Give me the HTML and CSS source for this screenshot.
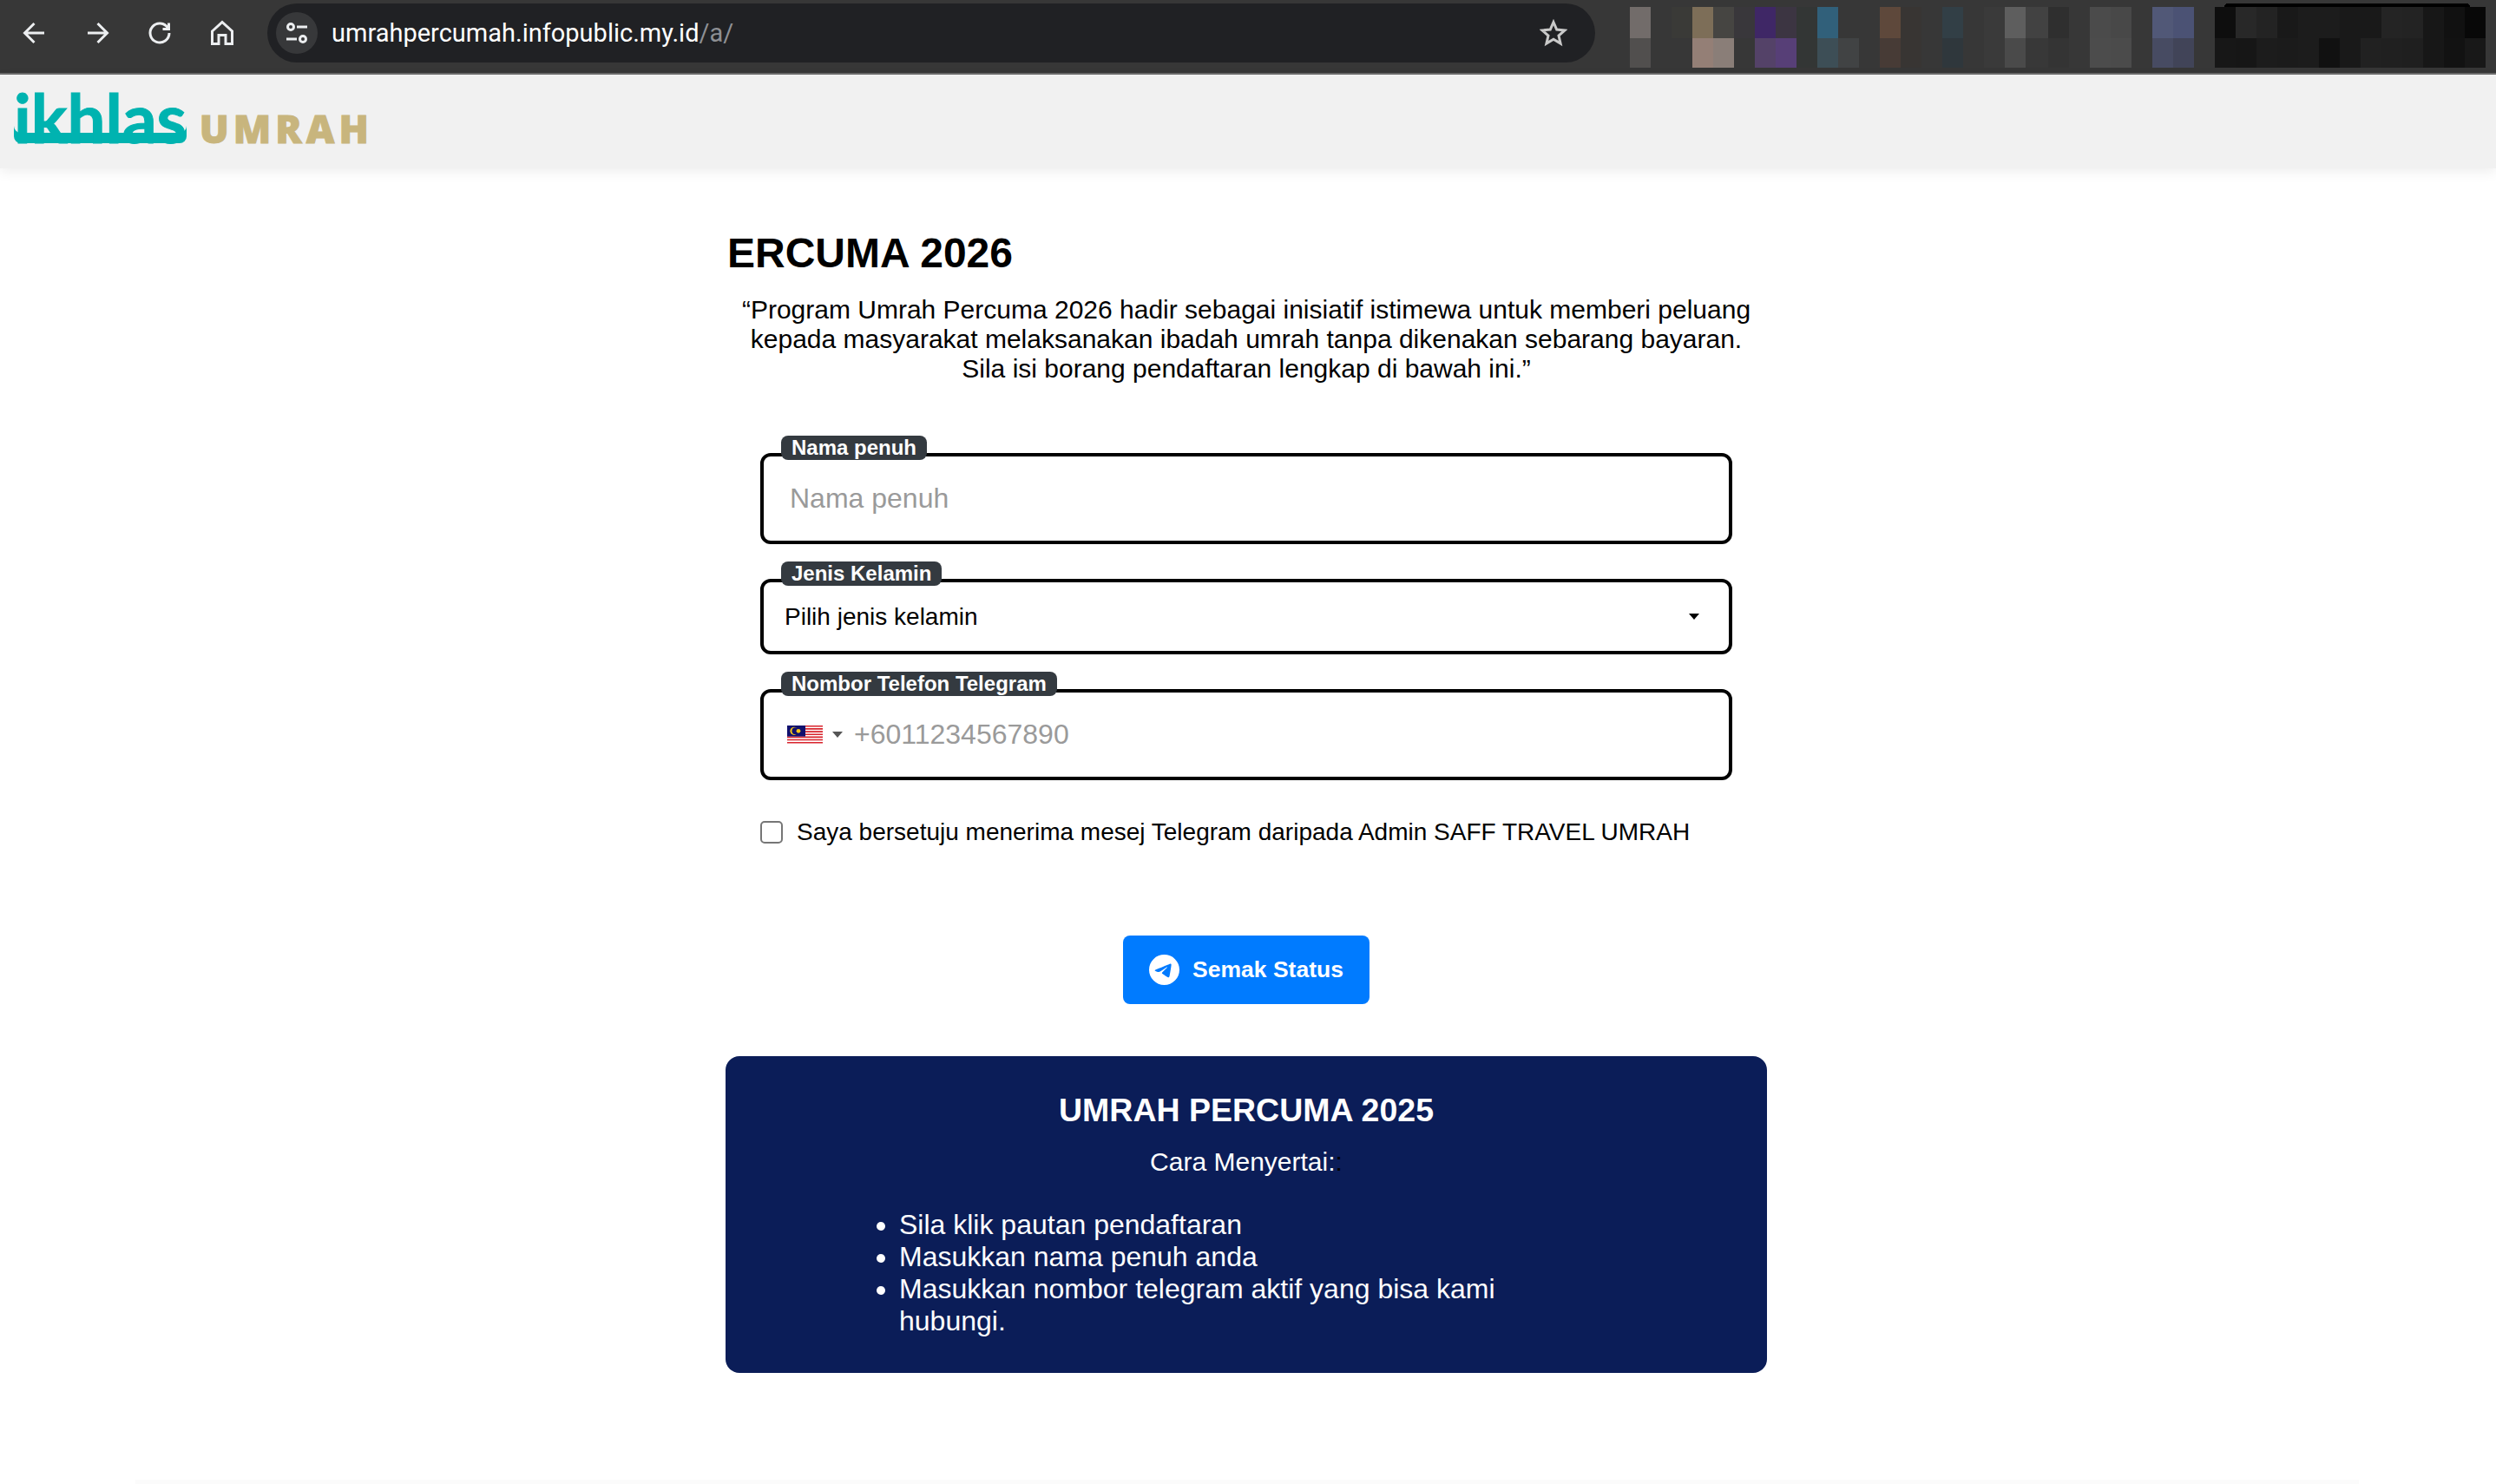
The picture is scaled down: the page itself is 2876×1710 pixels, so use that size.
FILE: index.html
```html
<!DOCTYPE html>
<html lang="en">

<head>
    <meta charset="UTF-8">
    <title>Umrah Percuma 2026</title>
    <link rel="stylesheet" href="styles.css">
</head>

<body>
    <!-- Browser toolbar -->
    <div class="toolbar">
        <button class="tool-btn" aria-label="Back">
            <svg width="30" height="30" viewBox="0 0 30 30"><path d="M26 15H4M14.500 4L3.500 15l11 11"/></svg>
        </button>
        <button class="tool-btn" aria-label="Forward">
            <svg width="30" height="30" viewBox="0 0 30 30"><path d="M4 15h22M15.500 4l11 11-11 11"/></svg>
        </button>
        <button class="tool-btn" aria-label="Reload">
            <svg width="30" height="30" viewBox="0 0 30 30"><path d="M24.500 9.500A11 11 0 1 0 26 15M25.500 3.500v7h-7"/></svg>
        </button>
        <button class="tool-btn" aria-label="Home">
            <svg width="30" height="30" viewBox="0 0 30 30"><path d="M3.500 13L15 2.500 26.500 13v14.500h-7.500v-10h-8v10H3.500z"/></svg>
        </button>

        <div class="omnibox">
            <span class="site-info">
                <svg width="26" height="26" viewBox="0 0 26 26"><circle cx="6" cy="6" r="3.500"/><path d="M13 6h12M1 20h12"/><circle cx="20" cy="20" r="3.500"/></svg>
            </span>
            <span class="url">umrahpercumah.infopublic.my.id<span class="url-path">/a/</span></span>
            <svg class="star" width="32" height="32" viewBox="0 0 32 32"><path d="M16 3.500l3.700 8.600 9.300.8-7 6.100 2.100 9.100-8.100-4.800-8.100 4.800 2.100-9.100-7-6.100 9.300-.8z"/></svg>
        </div>

        <!-- blurred extension icons -->
        <svg class="ext-icons" width="986" height="74" viewBox="0 0 986 74" shape-rendering="crispEdges">
            <rect x="685" y="0" width="283" height="8" rx="4" fill="#000"/>
            <rect x="0" y="4" width="24" height="36" fill="#726c6a"/><rect x="0" y="40" width="24" height="34" fill="#514f4e"/>
            <rect x="48" y="4" width="24" height="36" fill="#3a3a37"/>
            <rect x="72" y="4" width="24" height="36" fill="#7d6e58"/><rect x="72" y="40" width="24" height="34" fill="#947f76"/>
            <rect x="96" y="4" width="24" height="36" fill="#464542"/><rect x="96" y="40" width="24" height="34" fill="#8a7e78"/>
            <rect x="120" y="4" width="24" height="36" fill="#39373b"/>
            <rect x="144" y="4" width="24" height="36" fill="#3f2766"/><rect x="144" y="40" width="24" height="34" fill="#544268"/>
            <rect x="168" y="4" width="24" height="36" fill="#3c3542"/><rect x="168" y="40" width="24" height="34" fill="#573f77"/>
            <rect x="192" y="4" width="24" height="70" fill="#333635"/>
            <rect x="216" y="4" width="24" height="36" fill="#31607a"/><rect x="216" y="40" width="24" height="34" fill="#3d4e56"/>
            <rect x="240" y="40" width="24" height="34" fill="#414344"/>
            <rect x="288" y="4" width="24" height="36" fill="#5e483b"/><rect x="288" y="40" width="24" height="34" fill="#473b36"/>
            <rect x="312" y="4" width="24" height="70" fill="#383533"/>
            <rect x="360" y="4" width="24" height="36" fill="#323f46"/><rect x="360" y="40" width="24" height="34" fill="#2f373c"/>
            <rect x="408" y="4" width="24" height="70" fill="#3a3a3a"/>
            <rect x="432" y="4" width="24" height="36" fill="#5e5e5e"/><rect x="432" y="40" width="24" height="34" fill="#4a4a4a"/>
            <rect x="456" y="4" width="26" height="36" fill="#424242"/><rect x="456" y="40" width="26" height="34" fill="#383838"/>
            <rect x="482" y="4" width="24" height="36" fill="#2f2f2f"/><rect x="482" y="40" width="24" height="34" fill="#343434"/>
            <rect x="530" y="4" width="24" height="36" fill="#4b4b4b"/><rect x="530" y="40" width="24" height="34" fill="#4c4c4c"/>
            <rect x="554" y="4" width="24" height="36" fill="#484848"/><rect x="554" y="40" width="24" height="34" fill="#4b4b4b"/>
            <rect x="602" y="4" width="24" height="36" fill="#515877"/><rect x="602" y="40" width="24" height="34" fill="#474b62"/>
            <rect x="626" y="4" width="24" height="36" fill="#4b5274"/><rect x="626" y="40" width="24" height="34" fill="#414458"/>
            <rect x="674" y="4" width="24" height="36" fill="#0e0e0e"/><rect x="674" y="40" width="24" height="34" fill="#171717"/>
            <rect x="698" y="4" width="24" height="36" fill="#282828"/><rect x="698" y="40" width="24" height="34" fill="#161616"/>
            <rect x="722" y="4" width="24" height="36" fill="#232323"/><rect x="722" y="40" width="24" height="34" fill="#1c1c1c"/>
            <rect x="746" y="4" width="24" height="36" fill="#191919"/><rect x="746" y="40" width="24" height="34" fill="#1b1b1b"/>
            <rect x="770" y="4" width="24" height="36" fill="#1c1c1c"/><rect x="770" y="40" width="24" height="34" fill="#1c1c1c"/>
            <rect x="794" y="4" width="24" height="36" fill="#1c1c1c"/><rect x="794" y="40" width="24" height="34" fill="#111111"/>
            <rect x="818" y="4" width="24" height="36" fill="#191919"/><rect x="818" y="40" width="24" height="34" fill="#191919"/>
            <rect x="842" y="4" width="24" height="36" fill="#191919"/><rect x="842" y="40" width="24" height="34" fill="#212121"/>
            <rect x="866" y="4" width="24" height="36" fill="#242424"/><rect x="866" y="40" width="24" height="34" fill="#202020"/>
            <rect x="890" y="4" width="24" height="36" fill="#232323"/><rect x="890" y="40" width="24" height="34" fill="#1f1f1f"/>
            <rect x="914" y="4" width="24" height="36" fill="#171717"/><rect x="914" y="40" width="24" height="34" fill="#171717"/>
            <rect x="938" y="4" width="24" height="36" fill="#111111"/><rect x="938" y="40" width="24" height="34" fill="#121212"/>
            <rect x="962" y="4" width="24" height="36" fill="#080808"/><rect x="962" y="40" width="24" height="34" fill="#181818"/>
        </svg>
    </div>

    <!-- Site header -->
    <header class="site-header">
        <a class="logo" href="#">
            <span class="logo-mark">ikhlas</span>
            <span class="logo-sub">UMRAH</span>
        </a>
    </header>

    <main class="content">
        <h1 class="page-title">ERCUMA 2026</h1>
        <p class="intro">“Program Umrah Percuma 2026 hadir sebagai inisiatif istimewa untuk memberi peluang kepada masyarakat melaksanakan ibadah umrah tanpa dikenakan sebarang bayaran.<br>Sila isi borang pendaftaran lengkap di bawah ini.”</p>

        <form class="signup-form">
            <div class="field">
                <label class="field-label" for="nama">Nama penuh</label>
                <input class="field-box field-input" id="nama" type="text" placeholder="Nama penuh">
            </div>

            <div class="field field-select">
                <label class="field-label" for="jantina">Jenis Kelamin</label>
                <select class="field-box field-dropdown" id="jantina">
                    <option>Pilih jenis kelamin</option>
                    <option>Lelaki</option>
                    <option>Perempuan</option>
                </select>
            </div>

            <div class="field">
                <label class="field-label" for="telefon">Nombor Telefon Telegram</label>
                <div class="field-box phone-box">
                    <svg class="flag" width="41" height="22" viewBox="0 0 41 22">
                        <rect width="41" height="22" fill="#fff"/>
                        <path d="M0 0h41v1.600H0zM0 3.100h41v1.600H0zM0 6.300h41v1.600H0zM0 9.400h41v1.600H0zM0 12.600h41v1.600H0zM0 15.700h41v1.600H0zM0 18.900h41v1.600H0z" fill="#d8242c"/>
                        <rect width="21" height="12.600" fill="#10106e"/>
                        <circle cx="8" cy="6.300" r="4.600" fill="#f5c518"/>
                        <circle cx="9.500" cy="6.300" r="4" fill="#10106e"/>
                        <circle cx="13" cy="6.300" r="2.400" fill="#f5c518"/>
                    </svg>
                    <span class="phone-caret"></span>
                    <input class="phone-input" id="telefon" type="tel" placeholder="+6011234567890">
                </div>
            </div>

            <label class="consent">
                <input class="consent-check" type="checkbox">
                <span>Saya bersetuju menerima mesej Telegram daripada Admin SAFF TRAVEL UMRAH</span>
            </label>

            <button class="submit-btn" type="button">
                <svg width="35" height="35" viewBox="0 0 16 16" fill="#fff"><path d="M16 8A8 8 0 1 1 0 8a8 8 0 0 1 16 0M8.287 5.906q-1.168.486-4.666 2.010-.567.225-.595.442c-.03.243.275.339.69.47l.175.055c.408.133.958.288 1.243.294q.39.01.868-.32 3.269-2.206 3.374-2.23c.05-.012.12-.026.166.016s.042.12.037.141c-.03.129-1.227 1.241-1.846 1.817-.193.18-.33.307-.358.336a8 8 0 0 1-.188.186c-.38.366-.664.64.015 1.088.327.216.589.393.85.571.284.194.568.387.936.629q.14.092.27.187c.331.236.63.448.997.414.214-.02.435-.22.547-.82.265-1.417.786-4.486.906-5.751a1.400 1.400 0 0 0-.013-.315.34.34 0 0 0-.114-.217.4.4 0 0 0-.228-.077c-.2-.004-.507.12-1.566.553"/></svg>
                Semak Status
            </button>
        </form>

        <!-- Info card -->
        <section class="info-card">
            <h2 class="info-title">UMRAH PERCUMA 2025</h2>
            <p class="info-sub">Cara Menyertai:<span class="info-colon">:</span></p>
            <ul class="info-list">
                <li>Sila klik pautan pendaftaran</li>
                <li>Masukkan nama penuh anda</li>
                <li>Masukkan nombor telegram aktif yang bisa kami hubungi.</li>
            </ul>
        </section>
    </main>

    <footer class="page-footer"></footer>
</body>

</html>
```

FILE: styles.css
```css
* {
    margin: 0;
    padding: 0;
    box-sizing: border-box;
    font-family: "Liberation Sans", Arial, sans-serif;
}

:root {
    --primary-color: #007bff;
    --navy: #0b1d58;
    --label-bg: #343a40;
    --placeholder: #9a9a9a;
}

html,
body {
    height: 1710px;
    overflow: hidden;
}

body {
    background-color: #fff;
    color: #000;
}

/* Browser toolbar */
.toolbar {
    display: flex;
    align-items: flex-start;
    height: 86px;
    padding-left: 4px;
    background-color: #373737;
    border-bottom: 2px solid #6b6b6b;
}

.tool-btn {
    display: flex;
    align-items: center;
    justify-content: center;
    width: 72px;
    height: 76px;
    background: none;
    border: none;
}

.tool-btn svg,
.star,
.site-info svg {
    fill: none;
    stroke: #eceef0;
    stroke-width: 3;
}

.omnibox {
    display: flex;
    align-items: center;
    width: 1530px;
    height: 68px;
    margin: 4px 0 0 16px;
    padding-left: 10px;
    background-color: #202124;
    border-radius: 34px;
}

.site-info {
    display: flex;
    align-items: center;
    justify-content: center;
    flex-shrink: 0;
    width: 48px;
    height: 48px;
    border-radius: 50%;
    background-color: #37383a;
}

.url {
    margin-left: 16px;
    font-family: Roboto, sans-serif;
    font-size: 29px;
    color: #fff;
}

.url-path {
    font-family: inherit;
    color: #8e9094;
}

.star {
    margin-left: auto;
    margin-right: 32px;
    stroke: #c9c9c9;
}

.ext-icons {
    margin: 4px 0 0 40px;
    flex-shrink: 0;
}

/* Site header */
.site-header {
    display: flex;
    align-items: flex-end;
    height: 108px;
    padding: 0 0 29px 16px;
    background-color: #f1f1f1;
    box-shadow: 0 4px 14px rgba(0, 0, 0, 0.07);
}

.logo {
    display: flex;
    align-items: baseline;
    gap: 15px;
    text-decoration: none;
}

.logo-mark {
    font-family: Lato, sans-serif;
    font-size: 78px;
    font-weight: 700;
    line-height: 59px;
    color: #00b3b0;
    -webkit-text-stroke: 1px #00b3b0;
    box-shadow: inset 0 -12px 0 #00b3b0;
    border-radius: 0 0 8px 8px;
}

.logo-sub {
    font-family: "Open Sans", sans-serif;
    font-size: 45px;
    font-weight: 800;
    letter-spacing: 5px;
    line-height: 33px;
    color: #c8b57d;
    -webkit-text-stroke: 1px #c8b57d;
}

/* Main column */
.content {
    width: 1200px;
    margin-left: 836px;
}

.page-title {
    margin-top: 70px;
    padding-left: 2px;
    font-size: 48px;
    line-height: 56px;
}

.intro {
    margin-top: 20px;
    font-size: 30px;
    line-height: 34px;
    text-align: center;
}

/* Form */
.signup-form {
    width: 1120px;
    margin: 80px auto 0;
}

.field {
    position: relative;
    margin-bottom: 40px;
}

.field-label {
    position: absolute;
    top: -20px;
    left: 24px;
    z-index: 1;
    padding: 0 12px;
    font-size: 24px;
    font-weight: 700;
    line-height: 28px;
    color: #fff;
    background-color: var(--label-bg);
    border-radius: 8px;
}

.field-box {
    display: block;
    width: 100%;
    height: 105px;
    background-color: #fff;
    border: 4px solid #000;
    border-radius: 12px;
    outline: none;
}

.field-input {
    padding: 0 30px;
    font-size: 32px;
}

.field-input::placeholder,
.phone-input::placeholder {
    color: var(--placeholder);
    opacity: 1;
}

.field-dropdown {
    height: 87px;
    padding-left: 24px;
    font-size: 28px;
    color: #000;
    appearance: none;
}

.field-select::after {
    content: "";
    position: absolute;
    top: 40px;
    right: 38px;
    border-top: 7px solid #000;
    border-left: 6.500px solid transparent;
    border-right: 6.500px solid transparent;
}

.phone-box {
    display: flex;
    align-items: center;
    padding-left: 27px;
}

.phone-caret {
    margin-left: 11px;
    border-top: 7px solid #555;
    border-left: 6px solid transparent;
    border-right: 6px solid transparent;
}

.phone-input {
    flex: 1;
    margin-left: 13px;
    font-size: 32px;
    border: none;
    outline: none;
}

.consent {
    display: flex;
    align-items: center;
    gap: 16px;
    padding-top: 4px;
    font-size: 28px;
}

.consent-check {
    flex-shrink: 0;
    width: 26px;
    height: 26px;
    background-color: #fff;
    border: 2px solid #767676;
    border-radius: 5px;
    appearance: none;
}

.submit-btn {
    display: flex;
    align-items: center;
    justify-content: center;
    gap: 15px;
    width: 284px;
    height: 79px;
    margin: 103px auto 0;
    font-size: 26.500px;
    font-weight: 700;
    color: #fff;
    background-color: var(--primary-color);
    border: none;
    border-radius: 8px;
}

/* Info card */
.info-card {
    height: 365px;
    margin-top: 60px;
    padding-top: 40px;
    color: #fff;
    background-color: var(--navy);
    border-radius: 16px;
}

.info-title {
    font-size: 37.500px;
    line-height: 44px;
    text-align: center;
}

.info-sub {
    margin-top: 20px;
    font-size: 30px;
    line-height: 36px;
    text-align: center;
}

.info-colon {
    color: #000;
}

.info-list {
    width: 800px;
    margin: 36px 0 0 160px;
    padding-left: 40px;
    font-size: 32px;
    line-height: 37px;
}

/* Faint edge of the next section */
.page-footer {
    height: 10px;
    margin: 123px 158px 0 156px;
    background-color: #fbfbfb;
}
```
